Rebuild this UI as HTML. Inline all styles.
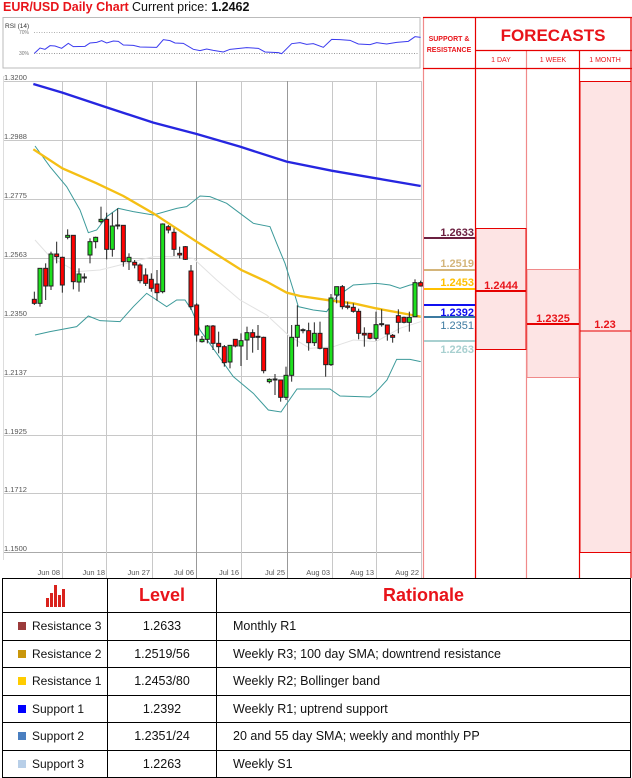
<!DOCTYPE html>
<html><head><meta charset="utf-8"><style>
body{margin:0;width:632px;height:778px;background:#fff;font-family:"Liberation Sans",sans-serif;position:relative;overflow:hidden}
.abs{position:absolute}
table{border-collapse:collapse;table-layout:fixed}
td{border:1.5px solid #000;font-size:12.5px;color:#111;padding:0;white-space:nowrap;overflow:hidden}
.sq{display:inline-block;width:8px;height:8px;margin:0 6px 0 15px;vertical-align:-0px}
.n{font-size:12px}
</style></head><body>
<div class="abs" style="left:3px;top:0;font-size:12.5px;font-weight:bold;color:#e8141a;">EUR/USD Daily Chart</div>
<div class="abs" style="left:132px;top:0;font-size:12.5px;color:#111;">Current price: <b>1.2462</b></div>

<svg class="abs" style="left:0;top:0" width="632" height="580" xmlns="http://www.w3.org/2000/svg">
 <rect x="3" y="17.5" width="417" height="50.5" fill="#fff" stroke="#bbb"/>
 <text x="5" y="28" font-size="6.5" fill="#333" font-family="Liberation Sans">RSI (14)</text>
 <text x="19" y="34" font-size="5" fill="#777" font-family="Liberation Sans">70%</text>
 <text x="19" y="55" font-size="5" fill="#777" font-family="Liberation Sans">30%</text>
 <line x1="34" y1="32.5" x2="419" y2="32.5" stroke="#999" stroke-dasharray="1,1.5" stroke-width="0.7"/>
 <line x1="34" y1="53.5" x2="419" y2="53.5" stroke="#777" stroke-dasharray="1,1.5" stroke-width="0.7"/>
 <g transform="translate(0,14) scale(0.33333)"><polyline fill="none" stroke="#3b3bef" stroke-width="3" points="103,118 120,102 135,106 150,95 165,96 185,103 205,88 220,98 255,97 270,87 290,85 305,80 320,87 340,81 355,82 370,93 400,94 420,99 470,100 490,77 510,80 525,87 550,88 580,106 600,110 620,105 640,109 670,114 690,106 740,101 775,103 795,114 835,116 845,119 875,89 900,86 920,91 940,89 970,100 995,76 1020,77 1050,79 1075,90 1110,92 1130,86 1160,90 1190,85 1225,82 1245,68 1262,70"/></g>

 <line x1="3.5" y1="76" x2="3.5" y2="560" stroke="#ddd"/>
 <g stroke="#c8c8c8" stroke-width="1">
  <line x1="4" y1="81.5" x2="421" y2="81.5"/><line x1="4" y1="140.5" x2="421" y2="140.5"/><line x1="4" y1="199.5" x2="421" y2="199.5"/>
  <line x1="4" y1="258.5" x2="421" y2="258.5"/><line x1="4" y1="317.5" x2="421" y2="317.5"/><line x1="4" y1="376.5" x2="421" y2="376.5"/>
  <line x1="4" y1="435.5" x2="421" y2="435.5"/><line x1="4" y1="493.5" x2="421" y2="493.5"/>
  <line x1="4" y1="552.5" x2="421" y2="552.5" stroke="#aaa"/>
  <line x1="62.5" y1="81" x2="62.5" y2="578"/><line x1="106.5" y1="81" x2="106.5" y2="578"/><line x1="152.5" y1="81" x2="152.5" y2="578"/>
  <line x1="196.5" y1="81" x2="196.5" y2="578" stroke="#999"/><line x1="241.5" y1="81" x2="241.5" y2="578"/><line x1="287.5" y1="81" x2="287.5" y2="578" stroke="#999"/>
  <line x1="332.5" y1="81" x2="332.5" y2="578"/><line x1="376.5" y1="81" x2="376.5" y2="578"/><line x1="421.5" y1="81" x2="421.5" y2="578"/>
 </g>
 <g font-family="Liberation Sans" font-size="7.5" fill="#555">
  <text x="4" y="80">1.3200</text><text x="4" y="139">1.2988</text><text x="4" y="198">1.2775</text><text x="4" y="257">1.2563</text>
  <text x="4" y="316">1.2350</text><text x="4" y="375">1.2137</text><text x="4" y="434">1.1925</text><text x="4" y="492">1.1712</text><text x="4" y="551">1.1500</text>
 </g>
 <g font-family="Liberation Sans" font-size="7.5" fill="#555" text-anchor="end">
  <text x="60" y="575">Jun 08</text><text x="105" y="575">Jun 18</text><text x="150" y="575">Jun 27</text><text x="194" y="575">Jul 06</text>
  <text x="239" y="575">Jul 16</text><text x="285" y="575">Jul 25</text><text x="330" y="575">Aug 03</text><text x="374" y="575">Aug 13</text><text x="419" y="575">Aug 22</text>
 </g>

 <g transform="translate(0,70) scale(0.33333)" fill="none">
  <polyline stroke="#e2e2e2" stroke-width="3" points="105,510 150,560 230,605 300,600 380,580 460,560 530,560 580,565 650,630 720,690 800,735 870,800 930,835 1000,830 1060,810 1128,815 1200,775 1262,755"/>
  <polyline stroke="#3c9a9a" stroke-width="3" points="105,228 150,290 200,350 240,420 265,488 290,480 320,440 355,415 400,425 460,435 530,415 560,410 600,378 630,380 680,400 720,430 760,460 810,470 830,520 855,580 880,660 895,710 940,720 980,725 1010,680 1060,645 1128,640 1170,645 1200,655 1230,645 1262,640"/>
  <polyline stroke="#3c9a9a" stroke-width="3" points="105,795 150,785 230,770 265,738 300,752 360,755 400,710 440,670 500,710 530,690 555,690 575,720 600,780 650,850 700,920 760,970 805,1020 843,1026 891,957 990,957 1020,978 1110,981 1128,966 1161,930 1190,868 1230,868 1262,875"/>
  <polyline stroke="#2626e0" stroke-width="7" points="100,42 187,68 320,112 460,158 590,192 720,230 860,275 995,302 1128,325 1262,348"/>
  <polyline stroke="#f5bf14" stroke-width="7" points="100,238 187,295 290,340 370,378 460,430 590,515 724,600 800,635 860,668 900,678 995,692 1060,700 1128,715 1262,740"/>
 </g>
 <g id="c" transform="translate(0,70) scale(0.33333)" stroke="#222" stroke-width="3"></g>

 <g stroke="#e60000" stroke-width="1.2" fill="none">
  <line x1="423.5" y1="17" x2="423.5" y2="578" stroke="#f08a8a"/>
  <line x1="475.5" y1="17" x2="475.5" y2="578"/>
  <line x1="526.5" y1="50" x2="526.5" y2="578" stroke="#f08a8a"/>
  <line x1="579.5" y1="50" x2="579.5" y2="578"/>
  <line x1="631" y1="17" x2="631" y2="578"/>
  <line x1="423" y1="17.5" x2="632" y2="17.5"/>
  <line x1="475" y1="50.5" x2="632" y2="50.5"/>
  <line x1="423" y1="68.5" x2="632" y2="68.5"/>
 </g>
 <g font-family="Liberation Sans" fill="#e8141a" text-anchor="middle">
  <text x="449" y="41" font-size="7" font-weight="bold">SUPPORT &amp;</text>
  <text x="449" y="52" font-size="7" font-weight="bold">RESISTANCE</text>
  <text x="553" y="41" font-size="17" font-weight="bold">FORECASTS</text>
  <text x="501" y="62" font-size="7">1 DAY</text>
  <text x="553" y="62" font-size="7">1 WEEK</text>
  <text x="605" y="62" font-size="7">1 MONTH</text>
 </g>
 <rect x="476" y="228.5" width="50" height="121" fill="#fde4e4" stroke="#e60000"/>
 <rect x="527" y="269.5" width="52" height="108" fill="#fde4e4" stroke="#f08a8a"/>
 <rect x="580" y="81.5" width="51" height="471" fill="#fde4e4" stroke="#e60000"/>
 <line x1="476" y1="291" x2="526" y2="291" stroke="#e60000" stroke-width="2"/>
 <line x1="527" y1="324" x2="579" y2="324" stroke="#e60000" stroke-width="2"/>
 <line x1="580" y1="331" x2="631" y2="331" stroke="#e60000" stroke-width="1"/>
 <g font-family="Liberation Sans" font-size="11" font-weight="bold" fill="#e8141a" text-anchor="middle">
  <text x="501" y="289">1.2444</text><text x="553" y="322">1.2325</text><text x="605" y="328">1.23</text>
 </g>
 <g stroke-width="2">
  <line x1="424" y1="238" x2="475" y2="238" stroke="#6b2040"/>
  <line x1="424" y1="270" x2="475" y2="270" stroke="#d4b57a"/>
  <line x1="424" y1="289" x2="475" y2="289" stroke="#ffc000"/>
  <line x1="424" y1="305" x2="475" y2="305" stroke="#1010f0"/>
  <line x1="424" y1="317" x2="475" y2="317" stroke="#3c7aa0"/>
  <line x1="424" y1="341" x2="475" y2="341" stroke="#a8d0d0"/>
 </g>
 <g font-family="Liberation Sans" font-size="11" font-weight="bold" text-anchor="end">
  <text x="474" y="236" fill="#6b2040">1.2633</text>
  <text x="474" y="267" fill="#d4b57a">1.2519</text>
  <text x="474" y="286" fill="#ffc000">1.2453</text>
  <text x="474" y="316" fill="#1010f0">1.2392</text>
  <text x="474" y="329" fill="#3c7aa0" font-weight="normal">1.2351</text>
  <text x="474" y="353" fill="#a8d0d0">1.2263</text>
 </g>
</svg>

<table class="abs" style="left:2px;top:578px;width:629px;">
 <colgroup><col style="width:105px"><col style="width:109px"><col></colgroup>
 <tr style="height:34px"><td style="text-align:center">
  <svg width="22" height="22" viewBox="0 0 22 22" style="vertical-align:middle"><g fill="#d9221c"><rect x="2" y="13" width="3" height="9"/><rect x="6" y="8" width="3" height="14"/><rect x="10" y="0" width="3" height="22"/><rect x="14" y="10" width="3" height="12"/><rect x="18" y="4" width="3" height="18"/></g></svg></td>
  <td style="text-align:center;font-size:18px;font-weight:bold;color:#e8141a">Level</td>
  <td style="text-align:center;font-size:18px;font-weight:bold;color:#e8141a">Rationale</td></tr>
 <tr style="height:27.5px"><td class="n"><span class="sq" style="background:#9b3b3b"></span>Resistance 3</td><td style="text-align:center">1.2633</td><td style="padding-left:16px">Monthly R1</td></tr>
 <tr style="height:27.5px"><td class="n"><span class="sq" style="background:#c9960a"></span>Resistance 2</td><td style="text-align:center">1.2519/56</td><td style="padding-left:16px">Weekly R3; 100 day SMA; downtrend resistance</td></tr>
 <tr style="height:27.5px"><td class="n"><span class="sq" style="background:#ffcc00"></span>Resistance 1</td><td style="text-align:center">1.2453/80</td><td style="padding-left:16px">Weekly R2; Bollinger band</td></tr>
 <tr style="height:27.5px"><td class="n"><span class="sq" style="background:#0000ff"></span>Support 1</td><td style="text-align:center">1.2392</td><td style="padding-left:16px">Weekly R1; uptrend support</td></tr>
 <tr style="height:27.5px"><td class="n"><span class="sq" style="background:#4a7fc0"></span>Support 2</td><td style="text-align:center">1.2351/24</td><td style="padding-left:16px">20 and 55 day SMA; weekly and monthly PP</td></tr>
 <tr style="height:27.5px"><td class="n"><span class="sq" style="background:#b8cfe8"></span>Support 3</td><td style="text-align:center">1.2263</td><td style="padding-left:16px">Weekly S1</td></tr>
</table>

<script>
var d=[[103,688,700,'r',665,705],[120,595,700,'g',595,710],[137,595,648,'r',580,690],[153,552,648,'g',545,660],[170,552,560,'r',515,580],[187,562,645,'r',560,668],[203,496,502,'g',478,508],[220,496,635,'r',496,658],[237,612,636,'g',595,665],[253,621,623,'d',610,638],[270,515,555,'g',505,580],[287,502,515,'g',500,535],[303,448,455,'g',410,460],[320,448,538,'r',428,568],[337,468,538,'g',428,560],[353,465,467,'d',415,478],[370,466,575,'r',466,590],[387,562,575,'g',550,600],[404,577,585,'r',570,595],[420,585,632,'r',580,640],[437,615,640,'r',595,648],[454,628,655,'r',610,665],[471,642,668,'r',600,692],[488,462,665,'g',460,670],[505,470,480,'r',465,490],[522,487,538,'r',475,558],[539,550,555,'r',530,565],[556,530,568,'r',528,570],[573,603,710,'r',585,720],[590,705,795,'r',700,815],[606,808,815,'g',798,818],[622,768,808,'g',765,820],[639,768,820,'r',765,840],[656,820,830,'r',785,850],[673,830,878,'r',825,890],[690,826,876,'g',826,895],[706,808,828,'r',808,832],[723,812,828,'g',790,888],[741,788,810,'g',770,870],[758,788,802,'r',778,848],[774,799,801,'d',765,840],[791,802,902,'r',800,910],[808,928,935,'g',925,940],[825,927,929,'d',912,975],[842,930,982,'r',930,995],[858,916,982,'g',890,990],[875,802,916,'g',765,935],[892,766,802,'g',706,830],[909,779,781,'d',775,790],[926,782,818,'r',758,842],[943,790,818,'g',757,828],[960,790,835,'r',755,838],[977,835,884,'r',835,920],[993,684,884,'g',672,888],[1010,650,675,'g',662,700],[1027,650,710,'r',645,718],[1043,708,712,'r',695,718],[1060,712,724,'r',700,728],[1076,724,790,'r',716,808],[1093,790,795,'r',772,830],[1110,790,805,'r',790,808],[1128,764,805,'g',725,812],[1145,761,763,'d',718,770],[1162,765,792,'r',765,812],[1178,796,802,'r',792,818],[1195,737,757,'r',718,790],[1212,742,757,'r',740,760],[1228,742,757,'g',725,785],[1245,638,740,'g',628,740],[1262,638,648,'r',632,650]];
var g=document.getElementById('c'),s='';
d.forEach(function(c){s+='<line x1="'+c[0]+'" y1="'+c[4]+'" x2="'+c[0]+'" y2="'+c[5]+'"/>';
var f=c[3]=='r'?'#f00':(c[3]=='g'?'#1de01d':'#222');
s+='<rect x="'+(c[0]-6)+'" y="'+c[1]+'" width="12" height="'+Math.max(3,c[2]-c[1])+'" fill="'+f+'"/>';});
g.innerHTML=s;
</script>
</body></html>
